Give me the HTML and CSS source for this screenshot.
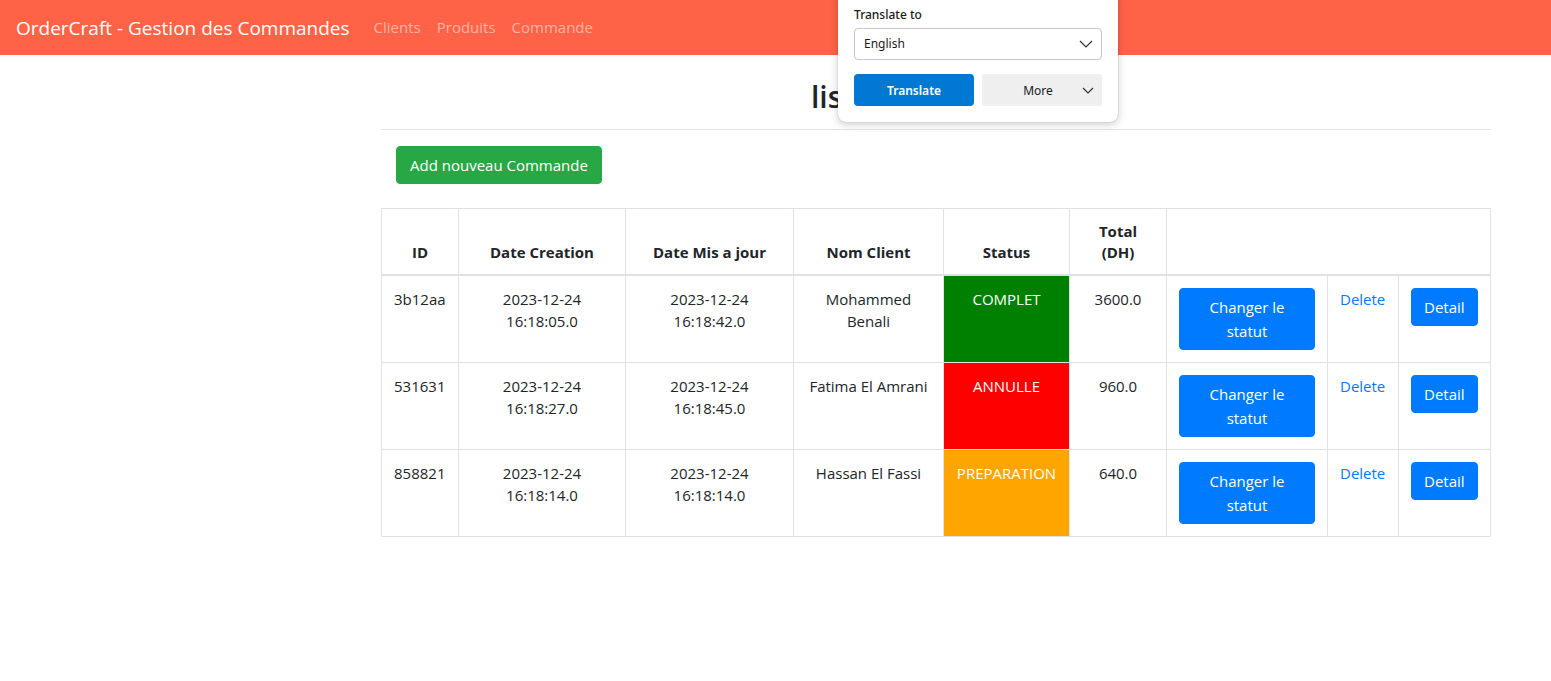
FILE: index.html
```html
<!DOCTYPE html>
<html lang="fr">
<head>
<meta charset="utf-8">
<title>OrderCraft</title>
<link rel="stylesheet" href="styles.css">
</head>
<body>
<nav class="navbar">
  <a class="brand" href="#">OrderCraft - Gestion des Commandes</a>
  <ul class="nav">
    <li><a class="nav-link" href="#">Clients</a></li>
    <li><a class="nav-link" href="#">Produits</a></li>
    <li><a class="nav-link" href="#">Commande</a></li>
  </ul>
</nav>

<div class="layout">
  <aside class="side"></aside>
  <main class="main">
    <h2 class="title">liste des commandes</h2>
    <hr class="rule">
    <div class="actions">
      <a class="btn btn-success" href="#">Add nouveau Commande</a>
    </div>
    <table class="orders">
      <colgroup>
        <col class="c-id"><col class="c-date"><col class="c-date2"><col class="c-name"><col class="c-status"><col class="c-total"><col class="c-change"><col class="c-del"><col class="c-detail">
      </colgroup>
      <thead>
        <tr>
          <th>ID</th>
          <th>Date Creation</th>
          <th>Date Mis a jour</th>
          <th>Nom Client</th>
          <th>Status</th>
          <th>Total (DH)</th>
          <th colspan="3"></th>
        </tr>
      </thead>
      <tbody>
        <tr>
          <td class="left">3b12aa</td>
          <td>2023-12-24 16:18:05.0</td>
          <td>2023-12-24 16:18:42.0</td>
          <td>Mohammed Benali</td>
          <td class="status complet">COMPLET</td>
          <td>3600.0</td>
          <td class="left"><a class="btn btn-primary btn-block" href="#">Changer le statut</a></td>
          <td class="left"><a class="link" href="#">Delete</a></td>
          <td class="left"><a class="btn btn-primary" href="#">Detail</a></td>
        </tr>
        <tr>
          <td class="left">531631</td>
          <td>2023-12-24 16:18:27.0</td>
          <td>2023-12-24 16:18:45.0</td>
          <td>Fatima El Amrani</td>
          <td class="status annulle">ANNULLE</td>
          <td>960.0</td>
          <td class="left"><a class="btn btn-primary btn-block" href="#">Changer le statut</a></td>
          <td class="left"><a class="link" href="#">Delete</a></td>
          <td class="left"><a class="btn btn-primary" href="#">Detail</a></td>
        </tr>
        <tr>
          <td class="left">858821</td>
          <td>2023-12-24 16:18:14.0</td>
          <td>2023-12-24 16:18:14.0</td>
          <td>Hassan El Fassi</td>
          <td class="status preparation">PREPARATION</td>
          <td>640.0</td>
          <td class="left"><a class="btn btn-primary btn-block" href="#">Changer le statut</a></td>
          <td class="left"><a class="link" href="#">Delete</a></td>
          <td class="left"><a class="btn btn-primary" href="#">Detail</a></td>
        </tr>
      </tbody>
    </table>
  </main>
</div>

<div class="translate-pop">
  <div class="tp-label">Translate to</div>
  <div class="tp-select">
    <span>English</span>
    <svg class="chev" width="14" height="8" viewBox="0 0 14 8"><path d="M1 1l6 6 6-6" fill="none" stroke="#333" stroke-width="1.2"/></svg>
  </div>
  <div class="tp-buttons">
    <button class="tp-btn tp-primary">Translate</button>
    <button class="tp-btn tp-more"><span>More</span>
      <svg class="chev chev-more" width="12" height="7" viewBox="0 0 12 7"><path d="M1 1l5 5 5-5" fill="none" stroke="#333" stroke-width="1.2"/></svg>
    </button>
  </div>
</div>
</body>
</html>
```

FILE: styles.css
```css
* { box-sizing: border-box; }
html, body { margin: 0; padding: 0; }
body {
  font-family: "Open Sans", "Noto Sans", sans-serif;
  font-size: 16px;
  line-height: 1.5;
  color: #212529;
  background: #fff;
  width: 1551px;
  height: 681px;
  overflow: hidden;
  position: relative;
}
a { text-decoration: none; }

.navbar {
  display: flex;
  align-items: center;
  height: 55px;
  padding: 8px 16px;
  background: #ff6347;
}
.brand {
  color: #fff;
  font-size: 19px;
  line-height: 30px;
  margin-right: 16px;
  white-space: nowrap;
}
.nav {
  list-style: none;
  display: flex;
  margin: 0;
  padding: 0;
}
.nav-link {
  display: block;
  padding: 8px 8px;
  color: rgba(255,255,255,.5);
  font-size: 15px;
}

.layout {
  display: flex;
}
.side { width: 381px; flex: none; }
.main { width: 1110px; flex: none; }

.title {
  margin: 24px 0 8px;
  padding-left: 54px;
  text-align: center;
  font-size: 30px;
  font-weight: 600;
  line-height: 1.2;
}
.rule {
  border: 0;
  border-top: 1px solid rgba(0,0,0,.1);
  margin: 14px 0 16px;
}
.actions { padding-left: 15px; margin-bottom: 24px; }

.btn {
  display: inline-block;
  padding: 6px 12px;
  font-size: 15px;
  line-height: 24px;
  border: 1px solid transparent;
  border-radius: 4px;
  color: #fff;
  text-align: center;
}
.btn-success { background: #28a745; border-color: #28a745; padding: 6px 13px; }
.btn-primary { background: #007bff; border-color: #007bff; }
.btn-block { display: block; width: 100%; }
.link { color: #007bff; font-size: 15px; }

.orders {
  border-collapse: collapse;
  table-layout: fixed;
  width: 1109px;
  font-size: 15px;
}
.c-id { width: 77px; }
.c-date { width: 167px; }
.c-date2 { width: 168px; }
.c-name { width: 150px; }
.c-status { width: 126px; }
.c-total { width: 97px; }
.c-change { width: 161px; }
.c-del { width: 71px; }
.c-detail { width: 92px; }

.orders th, .orders td {
  border: 1px solid #dee2e6;
  padding: 12px;
  text-align: center;
}
.orders th {
  vertical-align: bottom;
  font-weight: 700;
  line-height: 21px;
  padding-bottom: 11px;
  border-bottom: 2px solid #dee2e6;
}
.orders td {
  vertical-align: top;
  line-height: 22px;
}
.orders td.left { text-align: left; }
.status { color: #fff; }
.complet { background: #008000; }
.annulle { background: #ff0000; }
.preparation { background: #ffa500; }

.translate-pop {
  position: absolute;
  left: 838px;
  top: -10px;
  width: 280px;
  height: 132px;
  padding: 18px 16px 0;
  background: #fff;
  border-radius: 8px;
  box-shadow: 0 2px 8px rgba(0,0,0,.22), 0 0 1px rgba(0,0,0,.3);
  font-family: "Noto Sans", "Open Sans", sans-serif;
  font-size: 12px;
  color: #1a1a1a;
}
.tp-label { line-height: 14px; margin-top: 0; font-weight: 500; }
.tp-select {
  margin-top: 6px;
  height: 32px;
  border: 1px solid #c8c8c8;
  border-radius: 4px;
  display: flex;
  align-items: center;
  justify-content: space-between;
  padding: 0 8px 0 9px;
}
.tp-buttons {
  display: flex;
  gap: 8px;
  margin-top: 14px;
}
.tp-btn {
  height: 32px;
  width: 120px;
  flex: none;
  border: 0;
  border-radius: 4px;
  font-family: inherit;
  font-size: 12px;
  display: flex;
  align-items: center;
  justify-content: center;
  position: relative;
}
.tp-primary { background: #0078d4; color: #fff; font-weight: 600; }
.tp-more { background: #efefef; color: #1a1a1a; padding-right: 14px; }
.chev-more { position: absolute; right: 8px; top: 13px; }
```
